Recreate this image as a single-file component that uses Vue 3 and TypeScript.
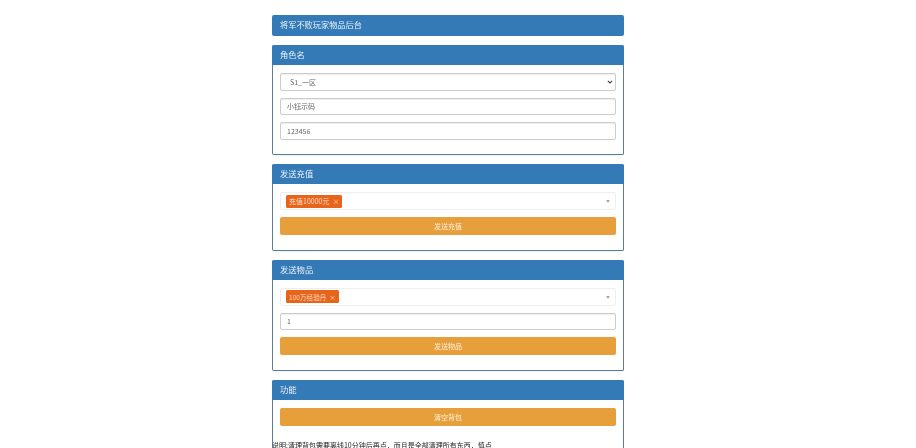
<script setup lang="ts">
const serverOptions: string[] = ['S1_一区']
const note = '说明:清理背包需要离线10分钟后再点\uFF0C而且是全部清理所有东西\uFF0C慎点'
</script>

<template>
  <div class="page">
    <main class="column">
      <div class="title-bar">将军不败玩家物品后台</div>

      <section class="panel panel-role">
        <h2 class="panel-head">角色名</h2>
        <div class="panel-body">
          <select class="field field-select">
            <option v-for="s in serverOptions" :key="s">{{ s }}</option>
          </select>
          <input class="field" value="小钰示码" />
          <input class="field" value="123456" />
        </div>
      </section>

      <section class="panel panel-pay">
        <h2 class="panel-head">发送充值</h2>
        <div class="panel-body">
          <div class="picker">
            <span class="tag">充值10000元<i class="tag-x">×</i></span>
            <span class="caret"></span>
          </div>
          <button class="action">发送充值</button>
        </div>
      </section>

      <section class="panel panel-item">
        <h2 class="panel-head">发送物品</h2>
        <div class="panel-body">
          <div class="picker picker-short">
            <span class="tag tag-tight">100万经验丹<i class="tag-x">×</i></span>
            <span class="caret"></span>
          </div>
          <input class="field" value="1" />
          <button class="action">发送物品</button>
        </div>
      </section>

      <section class="panel panel-func">
        <h2 class="panel-head">功能</h2>
        <div class="panel-body">
          <button class="action">清空背包</button>
        </div>
        <p class="note">{{ note }}</p>
      </section>
    </main>
  </div>
</template>

<style>
html, body { margin: 0; background: #fff; overflow: hidden; }
</style>

<style scoped>
.page {
  width: 896px;
  height: 448px;
  overflow: hidden;
  display: flex;
  justify-content: center;
  font-family: "Noto Sans CJK SC", "Liberation Sans", sans-serif;
  font-size: 7px;
  color: #333;
}
.column {
  width: 352px;
  padding-top: 15px;
  display: flex;
  flex-direction: column;
  gap: 9px;
  filter: blur(0.35px);
}
.title-bar {
  flex: none;
  height: 21px;
  line-height: 19px;
  padding: 0 8px;
  background: #337ab7;
  border-radius: 2px;
  color: #eaf1f7;
  font-size: 8.2px;
}
.panel {
  flex: none;
  border: 1px solid #5a7f92;
  border-top: 0;
  border-radius: 2px;
  background: #fff;
  box-shadow: 0 1px 1px rgba(0, 0, 0, .05);
}
.panel-head {
  margin: 0 -1px;
  height: 20px;
  line-height: 19px;
  padding: 0 8px;
  background: #337ab7;
  border-radius: 2px 2px 0 0;
  color: #eaf1f7;
  font-size: 8.3px;
  font-weight: 400;
}
.panel-body {
  padding: 8px 7px 0;
  display: flex;
  flex-direction: column;
  gap: 7px;
}
.panel-role { height: 109px; }
.panel-pay { height: 86px; }
.panel-item { height: 110px; }
.panel-func { min-height: 80px; }
.field {
  box-sizing: border-box;
  width: 100%;
  height: 17.5px;
  padding: 0 6px;
  border: 1px solid #ccc;
  border-radius: 2px;
  background: #fff;
  box-shadow: inset 0 1px 1px rgba(0, 0, 0, .07);
  font: inherit;
  color: #666;
  outline: none;
}
.field-select {
  appearance: none;
  padding: 0 9px;
  background: #fff url("data:image/svg+xml,%3Csvg xmlns='http://www.w3.org/2000/svg' width='6' height='4' viewBox='0 0 6 4'%3E%3Cpath d='M.8.8 3 3l2.2-2.2' fill='none' stroke='%23444' stroke-width='1.1'/%3E%3C/svg%3E") no-repeat right 2px center;
}
.picker {
  box-sizing: border-box;
  position: relative;
  height: 18px;
  display: flex;
  align-items: center;
  padding: 0 5px;
  border: 1px solid #eee;
  border-radius: 2px;
  background: #fff;
}
.picker-short { height: 17.5px; }
.tag {
  display: inline-flex;
  align-items: center;
  height: 13px;
  padding: 0 3px;
  border-radius: 1.5px;
  background: #e8641b;
  color: #f7dcc6;
  font-size: 7px;
}
.tag-tight { font-size: 6.6px; }
.tag-x { margin-left: 3px; font-style: normal; }
.caret {
  position: absolute;
  right: 5px;
  top: 7px;
  width: 0;
  height: 0;
  border-left: 2.5px solid transparent;
  border-right: 2.5px solid transparent;
  border-top: 3px solid #aaa;
}
.action {
  height: 17.5px;
  padding: 0;
  border: 0;
  border-radius: 2px;
  background: #e79f3c;
  color: #fbeedd;
  font: inherit;
  font-size: 7px;
}
.note {
  margin: 14px 0 0 -1px;
  line-height: 10px;
  color: #222;
  font-size: 7px;
}
</style>
